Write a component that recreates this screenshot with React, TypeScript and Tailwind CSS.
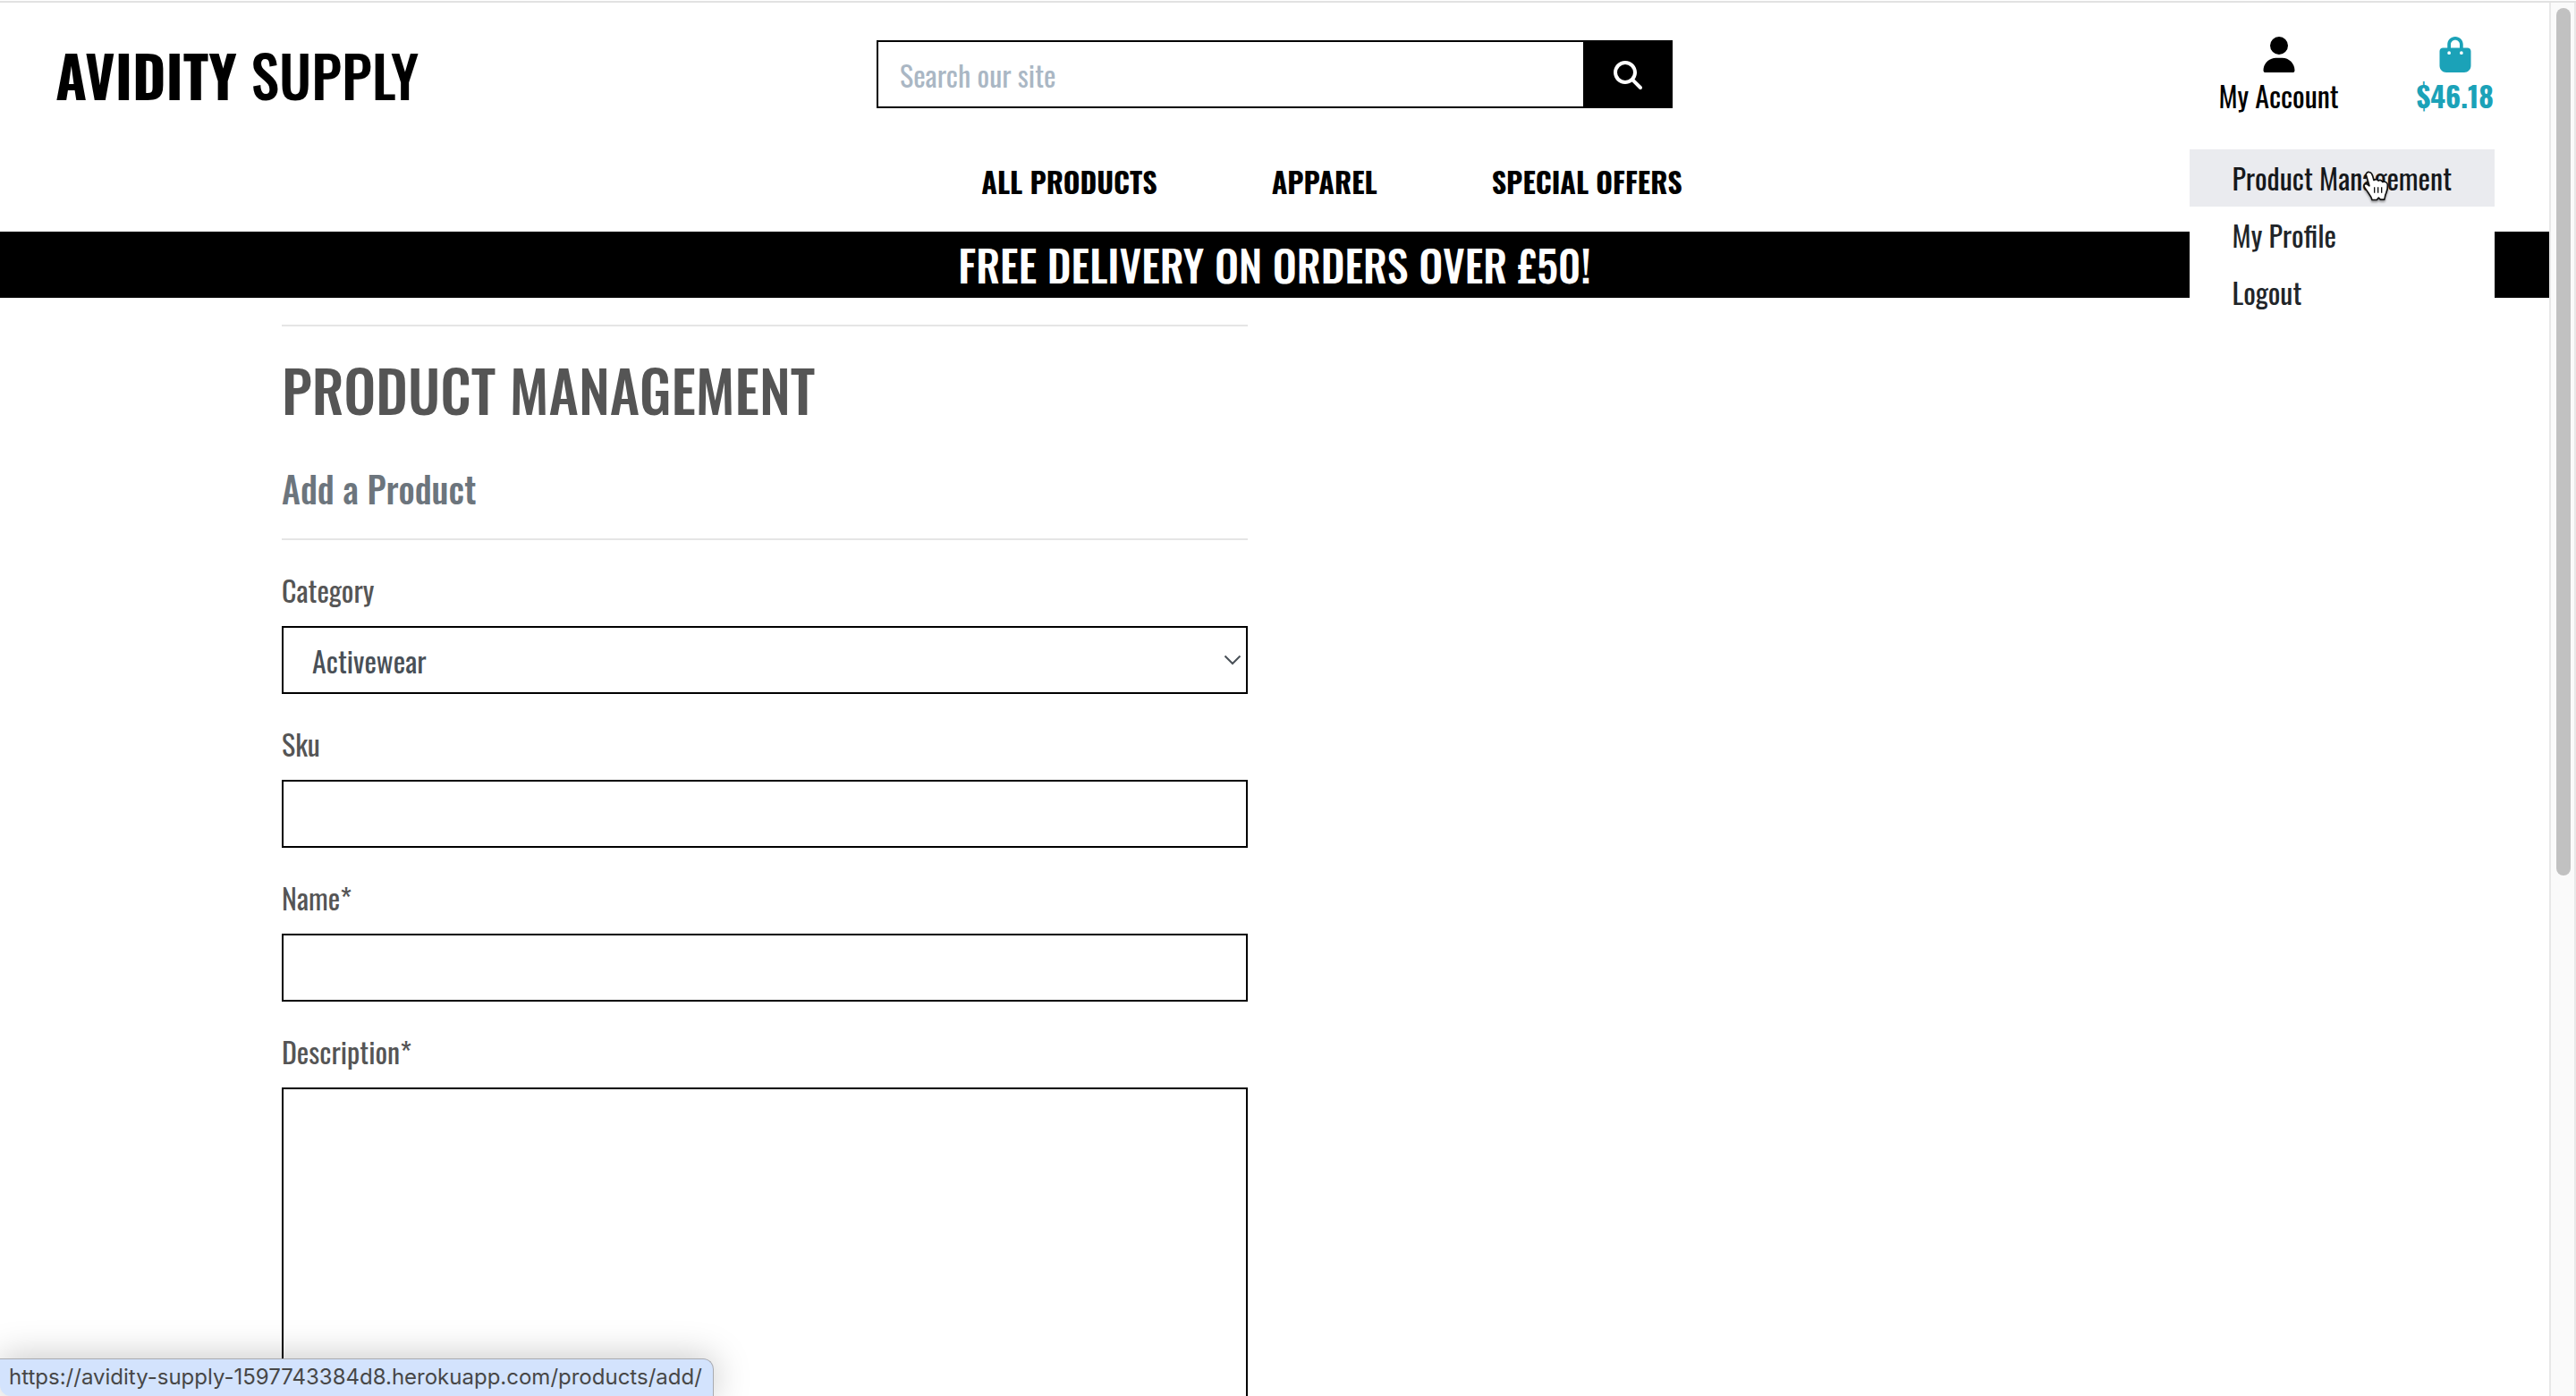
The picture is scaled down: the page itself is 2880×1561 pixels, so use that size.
import React from "react";
import { FaBagShopping, FaMagnifyingGlass, FaUser } from "react-icons/fa6";

const navLinks = ["All Products", "Apparel", "Special Offers"];

function HandCursor() {
  return (
    <svg
      viewBox="0 0 87 104"
      className="pointer-events-none absolute top-6 right-[118px] h-[35px] w-[29px] drop-shadow-[0_2px_1px_rgba(0,0,0,0.35)]"
      aria-hidden="true"
    >
      <path
        d="M10 14C9 6 15 3 21 4C28 5 30 10 32 17L36 31C41 27 48 28 51 33C56 29 63 31 65 37C73 34 81 38 82 46C83 60 81 66 77 75C73 83 74 88 71 96L58 96L52 90L46 97L30 97C28 86 22 80 15 70C10 62 4 56 3 50C3 43 11 42 16 46L21 50Z"
        fill="#fff"
        stroke="#111"
        strokeWidth="5"
        strokeLinejoin="round"
      />
      <path d="M38 54V74M50 54V74M62 54V74" stroke="#111" strokeWidth="4" />
    </svg>
  );
}

function AccountMenu() {
  return (
    <div className="absolute top-[164px] right-[61px] z-10 bg-white text-[#212529]">
      <ul>
        <li>
          <a href="#product-management" className="block bg-[#eaebef] px-12 py-2 text-[#16181b]">
            Product Management
          </a>
        </li>
        <li>
          <a href="#profile" className="block px-12 py-2">My Profile</a>
        </li>
        <li>
          <a href="#logout" className="block px-12 py-2">Logout</a>
        </li>
      </ul>
      <HandCursor />
    </div>
  );
}

function Header() {
  return (
    <header className="relative text-black">
      <div className="grid grid-cols-3 items-start">
        <a href="#home" className="px-[62px] pt-8 text-[64px] leading-[96px] font-medium">
          <strong className="font-bold">AVIDITY</strong> SUPPLY
        </a>
        <form className="mt-[42px] flex px-[30px]">
          <input
            type="search"
            aria-label="Search our site"
            placeholder="Search our site"
            className="h-[76px] min-w-0 flex-1 border-2 border-r-0 border-black px-6 placeholder:text-[#aab7c4]"
          />
          <button type="button" aria-label="Search" className="flex w-[100px] items-center justify-center bg-black pt-0.5 text-white">
            <FaMagnifyingGlass className="size-8" />
          </button>
        </form>
        <div className="flex justify-end gap-[87px] px-[62px] pt-[38px]">
          <button type="button" className="flex flex-col items-center gap-0.5">
            <FaUser className="size-10" />
            My Account
          </button>
          <a href="#bag" className="flex flex-col items-center gap-0.5 font-bold text-[#1ba2b8]">
            <FaBagShopping className="size-10" />
            $46.18
          </a>
        </div>
      </div>
      <nav className="mt-12 flex justify-center gap-32 pb-8 pl-32 font-bold uppercase">
        {navLinks.map((label) => (
          <a key={label} href="#shop">{label}</a>
        ))}
      </nav>
      <AccountMenu />
    </header>
  );
}

const fieldBox = "block w-full border-2 border-black bg-white px-8 text-[#495057]";

function ProductForm() {
  return (
    <form className="mt-8 flex flex-col gap-8">
      <div className="flex flex-col gap-4">
        <label htmlFor="category">Category</label>
        <div className="relative">
          <select id="category" className={`${fieldBox} h-[76px] appearance-none pt-0.5`}>
            <option>Activewear</option>
          </select>
          <svg
            viewBox="0 0 20 12"
            className="pointer-events-none absolute inset-y-0 right-[7px] my-auto h-3 w-5"
            fill="none"
            stroke="#495057"
            strokeWidth="2"
            aria-hidden="true"
          >
            <path d="M1.5 1.5L10 10L18.5 1.5" />
          </svg>
        </div>
      </div>
      <div className="flex flex-col gap-4">
        <label htmlFor="sku">Sku</label>
        <input id="sku" type="text" className={`${fieldBox} h-[76px]`} />
      </div>
      <div className="flex flex-col gap-4">
        <label htmlFor="name">Name*</label>
        <input id="name" type="text" className={`${fieldBox} h-[76px]`} />
      </div>
      <div className="flex flex-col gap-4">
        <label htmlFor="description">Description*</label>
        <textarea id="description" rows={10} className={`${fieldBox} resize-none py-3`} />
      </div>
    </form>
  );
}

export default function App() {
  return (
    <div className="relative flex h-screen flex-col overflow-hidden border-t border-white bg-white font-['Oswald',sans-serif] text-[32px] leading-[48px] text-[#555]">
      <div className="h-0.5 shrink-0 bg-[#e2e2e2]" />
      <div className="flex min-h-0 flex-1">
        <div className="min-w-0 flex-1 overflow-hidden">
          <Header />
          <p className="bg-black py-2 text-center text-5xl leading-[58px] font-medium text-white uppercase">
            Free delivery on orders over £50!
          </p>
          <main className="mx-auto max-w-[2280px] px-[30px] pt-[30px]">
            <section className="w-1/2 pr-[30px]">
              <hr className="border-t-2 border-[#e5e5e5]" />
              <h1 className="mt-8 text-[64px] leading-[77px] font-medium uppercase">Product Management</h1>
              <h2 className="mt-12 text-[40px] leading-[48px] font-medium text-[#6c757d]">Add a Product</h2>
              <hr className="mt-8 border-t-2 border-[#e5e5e5]" />
              <ProductForm />
            </section>
          </main>
        </div>
        <div className="w-[30px] shrink-0 border-x-2 border-[#e8e8e8] bg-[#fafafa] px-1.5 pt-1.5">
          <div className="h-5/8 w-4 max-w-none rounded-full bg-[#c1c1c1]" />
        </div>
      </div>
      <div className="absolute bottom-0 left-0 rounded-tr-xl rounded-bl-xl border border-b-0 border-l-0 border-[#a9abb0] bg-[#d3e3fd] pt-px pr-3 pb-0.5 pl-[10px] font-['Inter',sans-serif] text-2xl leading-[38px] text-[#474747] shadow-[0_0_40px_rgba(0,0,0,0.25)]">
        https://avidity-supply-1597743384d8.herokuapp.com/products/add/
      </div>
    </div>
  );
}
